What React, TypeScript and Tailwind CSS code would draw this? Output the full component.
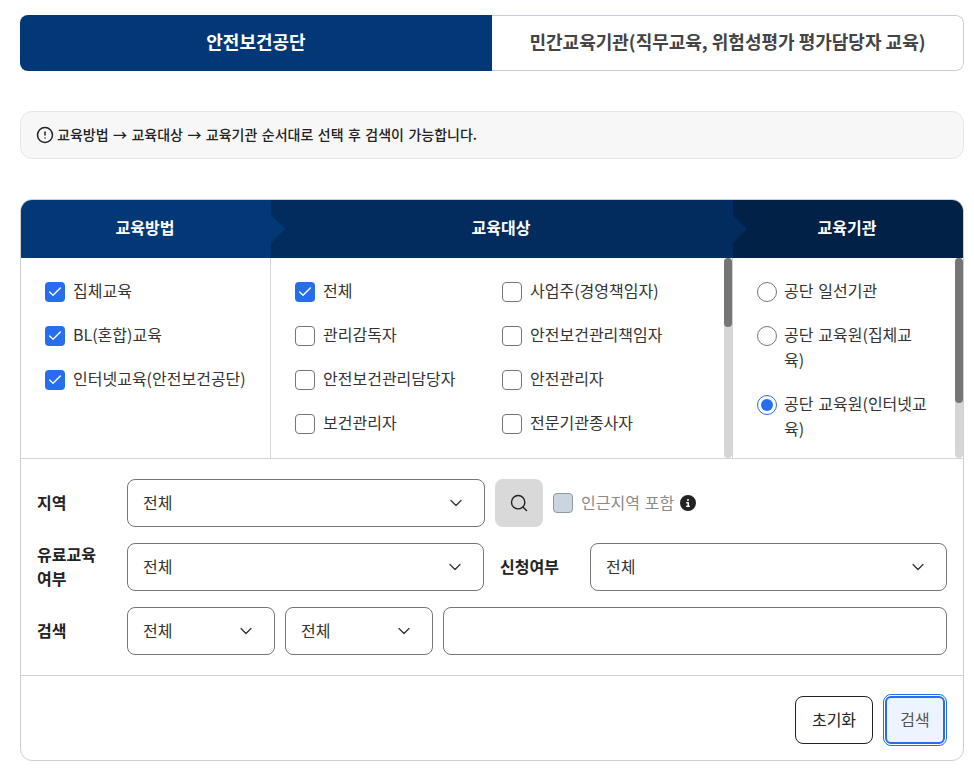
import { Check, ChevronDown, CircleAlert, Search } from "lucide-react";
import { FaCircleInfo } from "react-icons/fa6";

const font = "[font-family:'Noto_Sans_CJK_KR','Noto_Sans',sans-serif] [word-spacing:1.3px]";

function CheckRow({ label, checked }: { label: string; checked?: boolean }) {
  return (
    <label className="flex h-5 items-center gap-2 whitespace-nowrap text-[16px] text-[#333]">
      {checked ? (
        <span className="flex size-5 items-center justify-center rounded-[4px] bg-[#266eeb]">
          <Check className="size-4 text-white" strokeWidth={2} />
        </span>
      ) : (
        <span className="size-5 rounded-[4px] border border-[#767676] bg-white" />
      )}
      <span className="-mt-[4px]">{label}</span>
    </label>
  );
}

function RadioRow({ label, checked }: { label: string; checked?: boolean }) {
  return (
    <label className="flex items-start gap-[7px] text-[16px] leading-[25px] text-[#333]">
      {checked ? (
        <span className="flex size-5 shrink-0 items-center justify-center rounded-full border border-[#266eeb] bg-white">
          <span className="size-3 rounded-full bg-[#266eeb]" />
        </span>
      ) : (
        <span className="size-5 shrink-0 rounded-full border border-[#767676] bg-white" />
      )}
      <span className="-mt-[4px] -mb-[1px] w-[146px]">{label}</span>
    </label>
  );
}

function Select({ width }: { width: string }) {
  return (
    <div className={`flex h-12 items-center justify-between rounded-lg border border-[#767676] bg-white pl-[15px] pr-[18px] text-[16px] text-[#333] ${width}`}>
      <span className="-mt-[2px]">전체</span>
      <ChevronDown className="size-5 text-[#333]" strokeWidth={1.5} />
    </div>
  );
}

function Scrollbar({ thumb }: { thumb: string }) {
  return (
    <div className="absolute right-0 top-0 h-[200px] w-2 rounded-full bg-[#d6d6d6]">
      <div className={`w-2 rounded-full bg-[#757575] ${thumb}`} />
    </div>
  );
}

export default function App() {
  return (
    <div className={`h-[768px] w-[974px] overflow-hidden bg-white px-5 pt-[15px] ${font}`}>
      <div className="flex h-14 w-[944px] overflow-hidden rounded-lg text-[18px] font-bold">
        <div className="flex w-[472px] items-center justify-center bg-[#033876] pb-[3px] text-white">안전보건공단</div>
        <div className="flex flex-1 items-center justify-center rounded-r-lg border border-l-0 border-[#c3cde0] bg-white pb-[3px] text-[#444] [word-spacing:0px]">
          민간교육기관(직무교육, 위험성평가 평가담당자 교육)
        </div>
      </div>

      <div className="mt-10 flex h-12 w-[944px] items-center gap-[3px] rounded-xl border border-[#e5e5e5] bg-[#f7f7f7] px-4 pb-[1px] text-[14px] font-medium text-[#222]">
        <CircleAlert className="-ml-[1px] size-[18px]" strokeWidth={2} />
        <span>교육방법 → 교육대상 → 교육기관 순서대로 선택 후 검색이 가능합니다.</span>
      </div>

      <div className="mt-10 h-[562px] w-[944px] overflow-hidden rounded-xl border border-[#cfcfcf]">
        <div className="flex h-[58px] text-[16px] font-bold text-white">
          <div className="relative flex w-[250px] items-center justify-center bg-[#033876] pb-[4px] pr-[2px]">
            교육방법
            <span className="absolute -right-[14px] top-[15px] z-10 h-7 w-[14px] bg-[#033876] [clip-path:polygon(0_0,100%_50%,0_100%)]" />
          </div>
          <div className="relative flex w-[462px] items-center justify-center bg-[#022c5e] pb-[4px] pr-[2px]">
            교육대상
            <span className="absolute -right-[14px] top-[15px] z-10 h-7 w-[14px] bg-[#022c5e] [clip-path:polygon(0_0,100%_50%,0_100%)]" />
          </div>
          <div className="flex flex-1 items-center justify-center bg-[#012147] pb-[4px] pr-[2px]">교육기관</div>
        </div>

        <div className="flex h-[201px] border-b border-[#d4d4d4]">
          <div className="flex w-[250px] flex-col gap-6 border-r border-[#d4d4d4] pl-6 pt-6">
            <CheckRow label="집체교육" checked />
            <CheckRow label="BL(혼합)교육" checked />
            <CheckRow label="인터넷교육(안전보건공단)" checked />
          </div>
          <div className="relative w-[462px] border-r border-[#d4d4d4]">
            <div className="grid grid-cols-[207px_1fr] gap-y-6 pl-6 pt-6">
              <CheckRow label="전체" checked />
              <CheckRow label="사업주(경영책임자)" />
              <CheckRow label="관리감독자" />
              <CheckRow label="안전보건관리책임자" />
              <CheckRow label="안전보건관리담당자" />
              <CheckRow label="안전관리자" />
              <CheckRow label="보건관리자" />
              <CheckRow label="전문기관종사자" />
            </div>
            <Scrollbar thumb="h-[69px]" />
          </div>
          <div className="relative h-[200px] flex-1 overflow-hidden">
            <div className="flex flex-col gap-6 pl-6 pt-6">
              <RadioRow label="공단 일선기관" />
              <RadioRow label="공단 교육원(집체교육)" />
              <RadioRow label="공단 교육원(인터넷교육)" checked />
            </div>
            <Scrollbar thumb="h-[145px]" />
          </div>
        </div>

        <div className="flex h-[217px] flex-col gap-4 border-b border-[#d4d4d4] px-4 pt-5">
          <div className="flex items-center">
            <span className="-mt-[2px] w-[90px] text-[16px] font-bold text-[#222]">지역</span>
            <Select width="w-[358px]" />
            <button className="ml-[10px] flex size-12 items-center justify-center rounded-lg bg-[#d9d9d9]">
              <Search className="size-5 text-[#222]" strokeWidth={1.7} />
            </button>
            <span className="ml-[10px] size-5 rounded-[4px] border border-[#8d99a8] bg-[#cbd5e1]" />
            <span className="-mt-[2px] ml-2 text-[16px] text-[#8a8a8a]">인근지역 포함</span>
            <FaCircleInfo className="ml-[6px] size-4 text-[#222]" />
          </div>
          <div className="flex items-center">
            <span className="-mt-[2px] w-[90px] text-[16px] font-bold leading-[24px] text-[#222]">유료교육<br />여부</span>
            <Select width="w-[357px]" />
            <span className="-mt-[2px] ml-4 w-[90px] text-[16px] font-bold text-[#222]">신청여부</span>
            <Select width="w-[357px]" />
          </div>
          <div className="flex items-center">
            <span className="-mt-[2px] w-[90px] text-[16px] font-bold text-[#222]">검색</span>
            <Select width="w-[148px]" />
            <div className="ml-[10px]"><Select width="w-[148px]" /></div>
            <input className="ml-[10px] h-12 w-[504px] rounded-lg border border-[#767676] bg-white" />
          </div>
        </div>

        <div className="flex justify-end gap-3 pr-[18px] pt-5">
          <button className={`h-12 w-[78px] rounded-lg border border-[#222] bg-white pb-[3px] text-[16px] text-[#222] ${font}`}>초기화</button>
          <button className={`h-12 w-[60px] rounded-md border-2 border-[#266eeb] bg-[#eef4ff] pb-[3px] text-[16px] text-[#555] outline outline-1 outline-offset-1 outline-[#266eeb] ${font}`}>검색</button>
        </div>
      </div>
    </div>
  );
}
